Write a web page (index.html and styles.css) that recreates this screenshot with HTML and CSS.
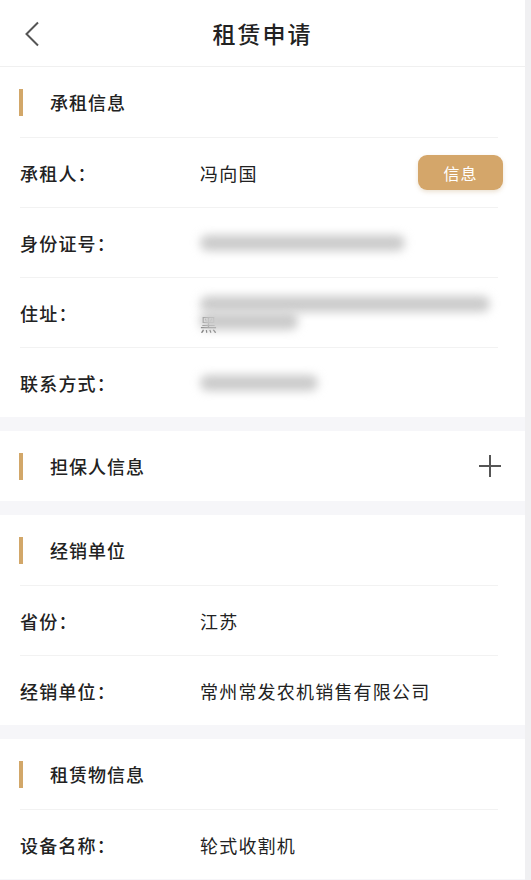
FILE: index.html
```html
<!DOCTYPE html>
<html lang="zh-CN">
<head>
  <meta charset="UTF-8">
  <title>租赁申请</title>
  <meta name="viewport" content="width=device-width, initial-scale=1.0">
  <link rel="stylesheet" href="styles.css">
</head>
<body>
  <div class="page">

    <header class="nav">
      <span class="back">
        <svg width="16" height="26" viewBox="0 0 16 26"><path d="M14 1.5 L2.5 13 L14 24.5" fill="none" stroke="#555" stroke-width="2"/></svg>
      </span>
      <h1>租赁申请</h1>
    </header>

    <!-- 承租信息 -->
    <section class="card">
      <div class="card-head"><span class="bar"></span>承租信息</div>
      <div class="row">
        <span class="label">承租人：</span>
        <span class="value">冯向国</span>
        <button class="info-btn">信息</button>
      </div>
      <div class="row">
        <span class="label">身份证号：</span>
        <span class="value"><span class="blur blur-id"></span></span>
      </div>
      <div class="row">
        <span class="label">住址：</span>
        <span class="value addr">
          <span class="blur blur-addr1"></span>
          <span class="addr-line2"><span class="addr-peek">黑</span><span class="blur blur-addr2"></span></span>
        </span>
      </div>
      <div class="row">
        <span class="label">联系方式：</span>
        <span class="value"><span class="blur blur-phone"></span></span>
      </div>
    </section>

    <!-- 担保人信息 -->
    <section class="card">
      <div class="card-head">
        <span class="bar"></span>担保人信息
        <span class="plus">
          <svg width="24" height="24" viewBox="0 0 24 24"><path d="M12 1 V23 M1 12 H23" stroke="#555" stroke-width="2"/></svg>
        </span>
      </div>
    </section>

    <!-- 经销单位 -->
    <section class="card">
      <div class="card-head"><span class="bar"></span>经销单位</div>
      <div class="row">
        <span class="label">省份：</span>
        <span class="value">江苏</span>
      </div>
      <div class="row">
        <span class="label">经销单位：</span>
        <span class="value">常州常发农机销售有限公司</span>
      </div>
    </section>

    <!-- 租赁物信息 -->
    <section class="card">
      <div class="card-head"><span class="bar"></span>租赁物信息</div>
      <div class="row">
        <span class="label">设备名称：</span>
        <span class="value">轮式收割机</span>
      </div>
    </section>

  </div>
</body>
</html>
```

FILE: styles.css
```css
/* Base */
body {
  margin: 0;
  background-color: #f0f0f2;
  font-family: "Noto Sans CJK SC", "Noto Sans", sans-serif;
  color: #222;
}

.page {
  width: 525px;
  min-height: 880px;
  background-color: #f6f6f9;
  overflow: hidden;
}

/* Nav bar */
.nav {
  height: 67px;
  background: white;
  border-bottom: 1px solid #f0f0f0;
  box-sizing: border-box;
  display: flex;
  align-items: center;
  justify-content: center;
  position: relative;
}

.nav h1 {
  margin: 0;
  font-size: 23px;
  font-weight: 500;
  letter-spacing: 2px;
  color: #222;
}

.back {
  position: absolute;
  left: 24px;
  top: 21px;
  line-height: 0;
}

/* Cards */
.card {
  background: white;
  margin-bottom: 14px;
}

.card-head {
  height: 70px;
  display: flex;
  align-items: center;
  font-size: 18px;
  font-weight: 500;
  letter-spacing: 1px;
  padding-left: 19px;
}

.bar {
  width: 4px;
  height: 27px;
  background-color: #d2a769;
  margin-right: 27px;
}

.plus {
  margin-left: auto;
  margin-right: 23px;
  line-height: 0;
}

.row {
  margin: 0 27px 0 20px;
  height: 70px;
  border-top: 1px solid #f2f2f2;
  box-sizing: border-box;
  display: flex;
  align-items: center;
  font-size: 18px;
  letter-spacing: 1.2px;
}

.label {
  width: 180px;
  font-weight: 500;
}

.value {
  flex: 1;
  color: #222;
}

.info-btn {
  width: 85px;
  height: 35px;
  background-color: #d4a66a;
  color: white;
  border: none;
  border-radius: 9px;
  font-family: inherit;
  font-size: 16px;
  letter-spacing: 1px;
  box-shadow: 0 2px 4px rgba(180, 140, 80, 0.25);
  margin-right: -5px;
}

/* Masked values */
.blur {
  display: block;
  height: 16px;
  background-color: #cbcbcb;
  border-radius: 8px;
  filter: blur(5px);
}

.blur-id {
  width: 205px;
}

.blur-phone {
  width: 118px;
}

.addr {
  display: flex;
  flex-direction: column;
  gap: 0;
  margin-top: 6px;
}

.blur-addr1 {
  width: 290px;
}

.addr-line2 {
  position: relative;
  height: 24px;
}

.blur-addr2 {
  position: absolute;
  left: 0;
  top: 0;
  width: 98px;
  height: 18px;
}

.addr-peek {
  position: absolute;
  left: 0;
  top: 3px;
  font-size: 17px;
  line-height: 1;
  color: #333;
  opacity: 0.7;
  filter: blur(0.6px);
}
```
